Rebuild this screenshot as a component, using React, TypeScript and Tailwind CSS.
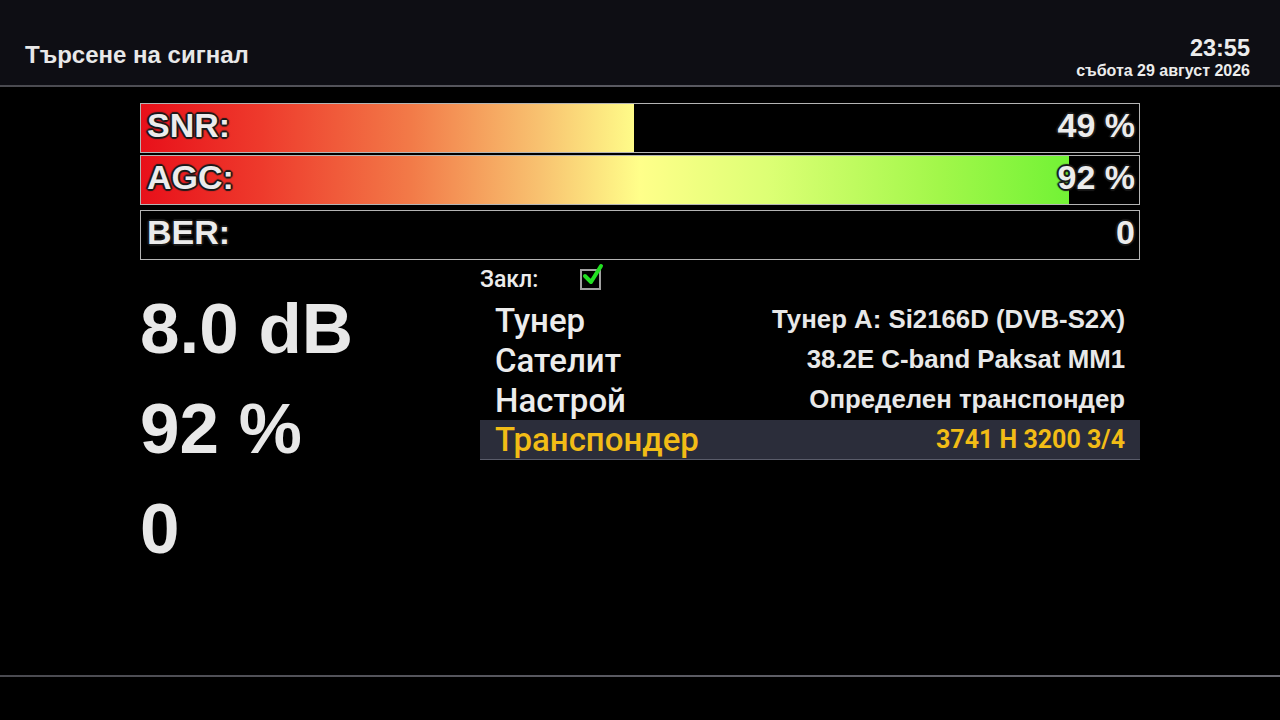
import React from 'react';

const outline =
  '[text-shadow:-2px_0_1px_#1a1a1a,2px_0_1px_#1a1a1a,0_-2px_1px_#1a1a1a,0_2px_1px_#1a1a1a,-1px_-1px_1px_#1a1a1a,1px_1px_1px_#1a1a1a,-1px_1px_1px_#1a1a1a,1px_-1px_1px_#1a1a1a]';

function SignalBar({ label, value, fill }: { label: string; value: string; fill: number }) {
  return (
    <div className="relative h-[50px] w-[1000px] border border-[#b4b4b4] bg-black">
      {/* gradient spans the full bar, the fill just clips it */}
      <div className="absolute inset-y-0 left-0 overflow-hidden" style={{ width: `${fill}%` }}>
        <div className="h-full w-[998px] bg-[linear-gradient(to_right,#e8101a_0%,#ee3a2c_12%,#f27a48_27%,#f8c270_40%,#ffff8a_50%,#dcff74_63%,#a2f74a_80%,#58f02a_100%)]" />
      </div>
      <div className="relative flex h-full items-center justify-between pb-[7px] pl-[6px] pr-[4px] text-[34px] font-bold leading-none text-[#ececec]">
        <span className={outline}>{label}</span>
        <span className={outline}>{value}</span>
      </div>
    </div>
  );
}

const rows = [
  { name: 'Тунер', value: 'Тунер A: Si2166D (DVB-S2X)' },
  { name: 'Сателит', value: '38.2E C-band Paksat MM1' },
  { name: 'Настрой', value: 'Определен транспондер' },
];

const label = { fontFamily: 'Roboto, sans-serif', fontWeight: 500 } as const;

export default function App() {
  return (
    <div
      className="flex h-[720px] w-[1280px] flex-col overflow-hidden bg-black text-[#ececec]"
      style={{ fontFamily: '"Liberation Sans", Arial, sans-serif' }}
    >
      {/* Header */}
      <div className="flex h-[85px] items-start justify-between bg-[#0e0e14] pl-[25px] pr-[30px]">
        <div className="mt-[43px] text-[24px] font-bold leading-none text-[#e8e8e8]">Търсене на сигнал</div>
        <div className="mt-[37px] flex flex-col items-end">
          <div className="text-[23.5px] font-bold leading-none">23:55</div>
          <div className="mt-[2px] text-[16px] font-bold leading-none">събота 29 август 2026</div>
        </div>
      </div>
      <div className="h-[2px] bg-[linear-gradient(to_right,#4a4a50,#5a5a62,#4a4a50)]" />

      {/* Bars */}
      <div className="ml-[140px] mt-[16px] flex flex-col">
        <SignalBar label="SNR:" value="49 %" fill={49.4} />
        <div className="mt-[2px]">
          <SignalBar label="AGC:" value="92 %" fill={93} />
        </div>
        <div className="mt-[5px]">
          <SignalBar label="BER:" value="0" fill={0} />
        </div>
      </div>

      {/* Body */}
      <div className="ml-[140px] flex flex-1">
        <div className="w-[340px] pt-[30px] text-[71px] font-bold leading-none text-[#e8e8e8]">
          <div className="h-[100px] pt-[3px]">8.0 dB</div>
          <div className="h-[100px] pt-[3px]">92 %</div>
          <div className="h-[100px] pt-[3px]">0</div>
        </div>
        <div className="w-[660px]">
          <div className="flex h-[40px] items-center pt-[1px]">
            <span className="w-[100px] text-[23px]" style={label}>
              Закл:
            </span>
            <span className="relative -mt-[2px] h-[21px] w-[21px] border-2 border-[#a0a0a0]">
              <svg className="absolute -right-[5px] -top-[8px]" width="22" height="24" viewBox="0 0 22 24">
                <path d="M3 13 L9 19 L19 3" fill="none" stroke="#22e022" strokeWidth="4" strokeLinecap="round" strokeLinejoin="round" />
              </svg>
            </span>
          </div>
          {rows.map((r) => (
            <div key={r.name} className="flex h-[40px] items-center justify-between pl-[15px] pr-[15px]">
              <span className="text-[33px] leading-none text-[#ececec]" style={label}>
                {r.name}
              </span>
              <span className="text-[25.8px] font-bold leading-none text-[#e8e8e8]">{r.value}</span>
            </div>
          ))}
          <div className="flex h-[40px] items-center justify-between border-b border-[#5a5c6a] bg-[#2b2d3a] pl-[15px] pr-[15px]">
            <span className="text-[33px] leading-none text-[#f2bc16]" style={label}>
              Транспондер
            </span>
            <span className="text-[25px] font-bold leading-none text-[#f2bc16]" style={{ fontFamily: 'Roboto, sans-serif' }}>
              3741 H 3200 3/4
            </span>
          </div>
        </div>
      </div>

      {/* Footer line */}
      <div className="mb-[43px] h-[2px] bg-[linear-gradient(to_right,#4a4a50,#5a5a62,#6a6a72)]" />
    </div>
  );
}
